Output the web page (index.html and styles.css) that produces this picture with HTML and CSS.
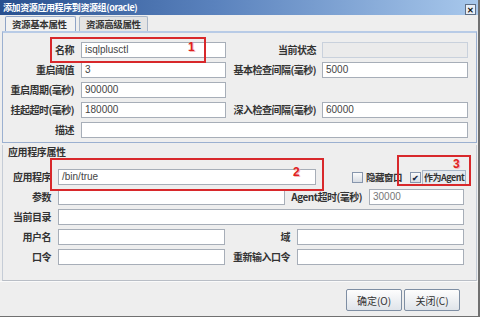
FILE: index.html
```html
<!DOCTYPE html>
<html lang="zh-CN">
<head>
    <meta charset="UTF-8">
    <title>添加资源应用程序到资源组(oracle)</title>
    <link rel="stylesheet" href="styles.css">
</head>
<body>
<div class="window">
    <!-- Title bar -->
    <div class="titlebar">
        <span class="title">添加资源应用程序到资源组(oracle)</span>
        <span class="close">✕</span>
    </div>

    <!-- Tabs -->
    <div class="tabs">
        <div class="tab active">资源基本属性</div>
        <div class="tab">资源高级属性</div>
    </div>

    <div class="tabpanel">
        <div class="basic-grid">
            <label class="lbl">名称</label>
            <div class="field">isqlplusctl</div>
            <label class="lbl">当前状态</label>
            <div class="field disabled"></div>

            <label class="lbl">重启阈值</label>
            <div class="field">3</div>
            <label class="lbl">基本检查间隔(毫秒)</label>
            <div class="field">5000</div>

            <label class="lbl">重启周期(毫秒)</label>
            <div class="field">900000</div>
            <span></span>
            <span></span>

            <label class="lbl">挂起超时(毫秒)</label>
            <div class="field">180000</div>
            <label class="lbl">深入检查间隔(毫秒)</label>
            <div class="field">60000</div>

            <label class="lbl">描述</label>
            <div class="field span3"></div>
        </div>
    </div>

    <!-- Application properties -->
    <div class="group">
        <div class="group-title">应用程序属性</div>
        <div class="row">
            <label class="lbl w55">应用程序</label>
            <div class="field" style="width: 258px">/bin/true</div>
            <span class="check first"><span class="box"></span>隐藏窗口</span>
            <span class="check"><span class="box checked">✔</span><span class="focus">作为Agent</span></span>
        </div>
        <div class="row">
            <label class="lbl w55">参数</label>
            <div class="field" style="width: 227px"></div>
            <label class="lbl" style="width: 84px">Agent超时(毫秒)</label>
            <div class="field gray-text" style="width: 95px">30000</div>
        </div>
        <div class="row">
            <label class="lbl w55">当前目录</label>
            <div class="field" style="width: 406px"></div>
        </div>
        <div class="row">
            <label class="lbl w55">用户名</label>
            <div class="field" style="width: 167px"></div>
            <label class="lbl" style="width: 72px">域</label>
            <div class="field" style="width: 167px"></div>
        </div>
        <div class="row">
            <label class="lbl w55">口令</label>
            <div class="field" style="width: 167px"></div>
            <label class="lbl" style="width: 72px">重新输入口令</label>
            <div class="field" style="width: 167px"></div>
        </div>
    </div>

    <!-- Buttons -->
    <div class="footer">
        <button class="btn">确定(O)</button>
        <button class="btn">关闭(C)</button>
    </div>

    <!-- Annotation marks -->
    <div class="mark mark-1"><span class="num">1</span></div>
    <div class="mark mark-2"><span class="num">2</span></div>
    <div class="mark mark-3"><span class="num">3</span></div>
</div>
</body>
</html>
```

FILE: styles.css
```css
body {
    margin: 0;
    font-family: "Noto Sans CJK SC", "Liberation Sans", sans-serif;
    font-size: 10px;
    color: #222;
}
.window {
    position: relative;
    width: 480px;
    height: 317px;
    box-sizing: border-box;
    background: #eeeeee;
    border-right: 2px solid #707070;
    border-bottom: 1px solid #707070;
    overflow: hidden;
}

/* Title bar */
.titlebar {
    height: 15px;
    display: flex;
    align-items: center;
    justify-content: space-between;
    padding: 0 2px 0 3px;
    background: linear-gradient(to right, #28508f 0%, #5a82bd 45%, #a8c8ec 100%);
}
.title {
    color: #fff;
    font-weight: bold;
    font-size: 9px;
    line-height: 15px;
    letter-spacing: -0.4px;
}
.close {
    width: 9px;
    height: 9px;
    margin-top: 3px;
    border: 1px solid #5d6e86;
    background: #e8eef6;
    color: #111;
    font-size: 8px;
    font-weight: bold;
    line-height: 9px;
    text-align: center;
}

/* Tabs */
.tabs {
    display: flex;
    gap: 3px;
    padding: 1px 0 0 5px;
    height: 15px;
}
.tab {
    height: 14px;
    padding: 0 6px;
    border: 1px solid #a9b6c8;
    border-bottom: none;
    border-radius: 2px 2px 0 0;
    background: #e4e4e4;
    font-weight: bold;
    font-size: 9.5px;
    line-height: 14px;
    letter-spacing: -0.4px;
    color: #333;
}
.tab.active {
    width: 57px;
    background: #f2f2f2;
    border-color: #8fa4c7;
}
.tabpanel {
    margin-left: 2px;
    width: 475px;
    height: 112px;
    box-sizing: border-box;
    border: 1px solid #9bb0d0;
    border-top: 2px solid #b8cbe6;
}
.basic-grid {
    display: grid;
    grid-template-columns: 78px 145px 96px 146px;
    grid-auto-rows: 16px;
    row-gap: 4px;
    padding-top: 9px;
}
.lbl {
    font-weight: bold;
    text-align: right;
    padding-right: 7px;
    line-height: 16px;
    letter-spacing: -0.5px;
    white-space: nowrap;
    color: #333;
    box-sizing: border-box;
}
.basic-grid .lbl:nth-child(4n+3) {
    padding-right: 6px;
}
.field {
    height: 16px;
    box-sizing: border-box;
    border: 1px solid #a7aeb8;
    background: #fff;
    font-family: "Liberation Sans", sans-serif;
    font-size: 10px;
    line-height: 14px;
    padding-left: 3px;
    color: #444;
}
.field.disabled {
    background: #ebebeb;
    border-color: #c9d1dc;
}
.field.span3 {
    grid-column: 2 / 5;
}
.gray-text {
    color: #777;
}

/* Application group */
.group {
    margin: 2px 0 0 2px;
    width: 475px;
    height: 136px;
    box-sizing: border-box;
    border-left: 1px solid #c5ccd6;
    border-right: 1px solid #c5ccd6;
    border-bottom: 1px solid #b9bec6;
}
.group-title {
    font-weight: bold;
    line-height: 14px;
    padding-left: 5px;
    margin-bottom: 10px;
    letter-spacing: -0.4px;
    color: #333;
}
.row {
    display: flex;
    align-items: center;
    height: 16px;
    margin-bottom: 4px;
}
.w55 {
    width: 55px;
}
.check {
    display: flex;
    align-items: center;
    font-weight: bold;
    font-size: 9.5px;
    letter-spacing: -0.5px;
    white-space: nowrap;
    color: #333;
}
.check.first {
    margin-left: 36px;
    margin-right: 8px;
}
.box {
    width: 9px;
    height: 9px;
    border: 1px solid #8796ad;
    background: linear-gradient(#fbfbfb, #d8dde4);
    margin-right: 3px;
    font-size: 8px;
    line-height: 9px;
    letter-spacing: 0;
    text-align: center;
    color: #1b2a44;
}
.box.checked {
    margin-right: 1px;
}
.focus {
    border: 1px solid #a8b6c8;
    padding: 0 1px;
    font-size: 9px;
    line-height: 13px;
    background: #e6eaef;
}

/* Footer */
.footer {
    display: flex;
    justify-content: flex-end;
    gap: 2px;
    padding: 7px 18px 0 0;
    border-top: 1px solid #fafafa;
}
.btn {
    width: 56px;
    height: 22px;
    border: 1px solid #7e8ea3;
    border-radius: 2px;
    background: linear-gradient(#fdfdfd, #dfe4ea);
    font-family: "Noto Sans CJK SC", "Liberation Sans", sans-serif;
    font-size: 10px;
    color: #333;
    padding: 0;
}

/* Red annotation boxes */
.mark {
    position: absolute;
    border: 2px solid #d8282b;
    box-sizing: border-box;
}
.mark-1 { left: 50px; top: 37px; width: 156px; height: 26px; }
.mark-2 { left: 50px; top: 158px; width: 274px; height: 33px; }
.mark-3 { left: 397px; top: 155px; width: 74px; height: 31px; }
.num {
    position: absolute;
    color: #e02020;
    font-family: "Liberation Sans", sans-serif;
    font-weight: bold;
    font-size: 12px;
    line-height: 12px;
    text-shadow: 1px 1px 0 #f3b7b7;
}
.mark-1 .num { left: 136px; top: 2px; }
.mark-2 .num { left: 241px; top: 6px; }
.mark-3 .num { left: 54px; top: 1px; }
```
